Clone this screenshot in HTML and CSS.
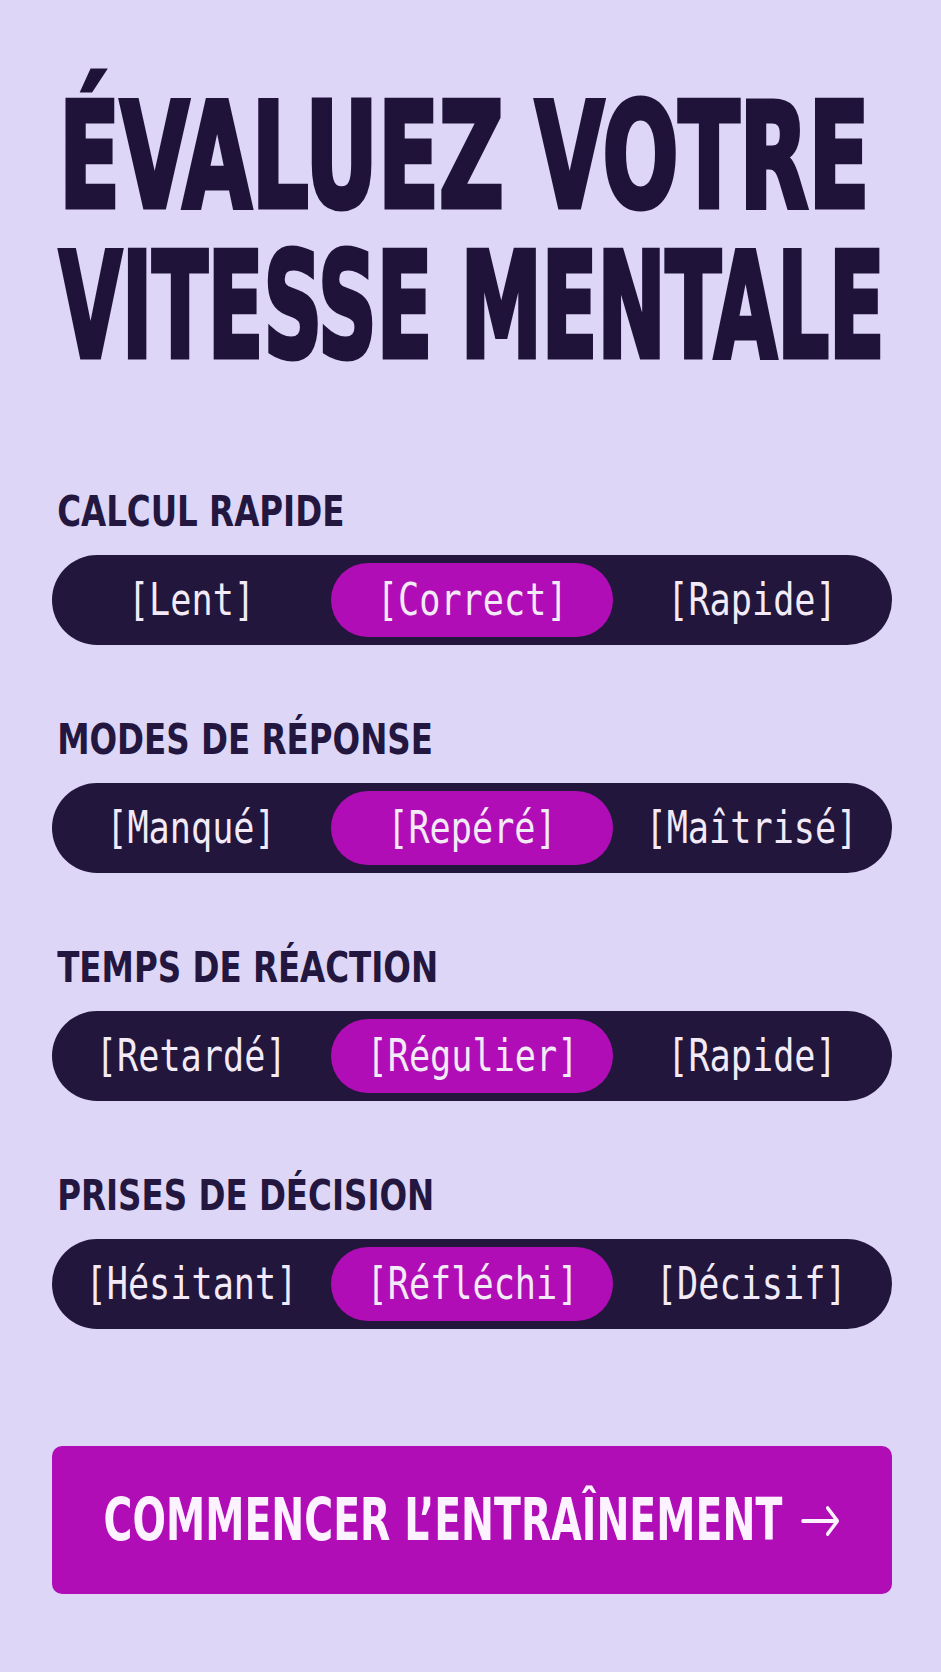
FILE: index.html
```html
<!DOCTYPE html>
<html lang="fr">
<head>
<meta charset="utf-8">
<title>Évaluez votre vitesse mentale</title>
<link rel="stylesheet" href="styles.css">
</head>
<body>
<main class="page">
  <h1 class="title"><span class="title-line title-line-1">ÉVALUEZ VOTRE</span><span class="title-line title-line-2">VITESSE MENTALE</span></h1>

  <section class="group">
    <h2 class="label">CALCUL RAPIDE</h2>
    <div class="segmented">
      <div class="seg"><span class="seg-text">[Lent]</span></div>
      <div class="seg seg-active"><span class="seg-text">[Correct]</span></div>
      <div class="seg"><span class="seg-text">[Rapide]</span></div>
    </div>
  </section>

  <section class="group">
    <h2 class="label">MODES DE RÉPONSE</h2>
    <div class="segmented">
      <div class="seg"><span class="seg-text">[Manqué]</span></div>
      <div class="seg seg-active"><span class="seg-text">[Repéré]</span></div>
      <div class="seg"><span class="seg-text">[Maîtrisé]</span></div>
    </div>
  </section>

  <section class="group">
    <h2 class="label">TEMPS DE RÉACTION</h2>
    <div class="segmented">
      <div class="seg"><span class="seg-text">[Retardé]</span></div>
      <div class="seg seg-active"><span class="seg-text">[Régulier]</span></div>
      <div class="seg"><span class="seg-text">[Rapide]</span></div>
    </div>
  </section>

  <section class="group">
    <h2 class="label">PRISES DE DÉCISION</h2>
    <div class="segmented">
      <div class="seg"><span class="seg-text">[Hésitant]</span></div>
      <div class="seg seg-active"><span class="seg-text">[Réfléchi]</span></div>
      <div class="seg"><span class="seg-text">[Décisif]</span></div>
    </div>
  </section>

  <button class="cta" type="button">
    <span class="cta-inner">
      <span class="cta-text">COMMENCER L’ENTRAÎNEMENT</span>
      <svg class="cta-arrow" width="52" height="34" viewBox="0 0 52 34" aria-hidden="true">
        <path d="M2 17 H48 M35 4 L48 17 L35 30" fill="none" stroke="currentColor" stroke-width="4" stroke-linecap="round" stroke-linejoin="round"/>
      </svg>
    </span>
  </button>
</main>
</body>
</html>
```

FILE: styles.css
```css
* { box-sizing: border-box; }

html, body {
  margin: 0;
  padding: 0;
  background: #ddd6f7;
}

body {
  font-family: "DejaVu Sans Condensed", "DejaVu Sans", sans-serif;
  color: #22153e;
}

.page {
  width: 941px;
  min-height: 1672px;
  padding: 81px 49px 0 52px;
  display: flex;
  flex-direction: column;
  overflow: hidden;
}

.title {
  margin: 0 0 106px 0;
  font-family: "DejaVu Sans Condensed", "DejaVu Sans", sans-serif;
  font-stretch: condensed;
  font-weight: 700;
  font-size: 146px;
  line-height: 150px;
  color: #20133a;
  -webkit-text-stroke: 5px #20133a;
  display: flex;
  flex-direction: column;
  padding-left: 7px;
}

.title-line {
  display: block;
  white-space: nowrap;
  transform-origin: left center;
}

.title-line-1 { transform: scaleX(0.681); }
.title-line-2 { transform: scaleX(0.62); }

.group {
  display: flex;
  flex-direction: column;
  margin-bottom: 70px;
}

.label {
  margin: 0 0 18px 0;
  padding-left: 6px;
  font-family: "DejaVu Sans Condensed", "DejaVu Sans", sans-serif;
  font-stretch: condensed;
  font-weight: 700;
  font-size: 42px;
  line-height: 50px;
  color: #23163f;
  white-space: nowrap;
  transform: scaleX(0.86);
  transform-origin: left center;
}

.segmented {
  height: 90px;
  border-radius: 45px;
  background: #22163c;
  padding: 8px;
  display: grid;
  grid-template-columns: minmax(0, 1fr) 282px minmax(0, 1fr);
  align-items: stretch;
}

.seg {
  display: flex;
  align-items: center;
  justify-content: center;
  border-radius: 37px;
  min-width: 0;
}

.seg:first-child { padding-right: 9px; }
.seg:last-child { padding-left: 6px; }

.seg-active {
  background: #b00db6;
}

.seg-text {
  display: inline-block;
  flex: none;
  font-family: "DejaVu Sans Mono", "Liberation Mono", monospace;
  font-size: 44px;
  line-height: 50px;
  color: #f3eaf8;
  white-space: nowrap;
  transform: scaleX(0.8);
  transform-origin: center center;
}

.group:last-of-type {
  margin-bottom: 117px;
}

.cta {
  height: 148px;
  width: 100%;
  border: none;
  border-radius: 10px;
  background: #b00db6;
  color: #fdf2ff;
  display: flex;
  align-items: center;
  justify-content: center;
  padding: 0;
  cursor: pointer;
}

.cta-inner {
  display: inline-flex;
  align-items: center;
  gap: 25px;
  transform: scaleX(0.755);
  transform-origin: center center;
  white-space: nowrap;
}

.cta-text {
  font-family: "DejaVu Sans Condensed", "DejaVu Sans", sans-serif;
  font-stretch: condensed;
  font-weight: 700;
  font-size: 58px;
  line-height: 60px;
}

.cta-arrow {
  display: block;
  flex: none;
  margin-top: 2px;
}
```
